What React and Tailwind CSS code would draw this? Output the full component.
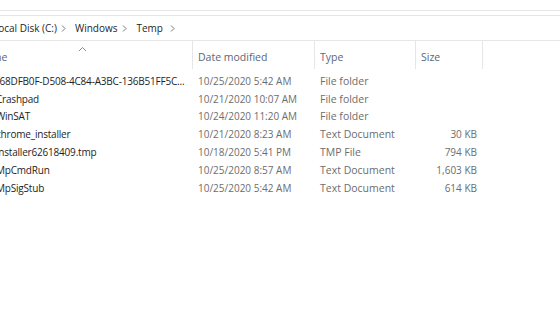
import React from 'react';

const ROWS = [
  { name: "{68DFB0F-D508-4C84-A3BC-136B51FF5C...", date: "10/25/2020 5:42 AM", type: "File folder", size: "" },
  { name: "Crashpad", date: "10/21/2020 10:07 AM", type: "File folder", size: "" },
  { name: "WinSAT", date: "10/24/2020 11:20 AM", type: "File folder", size: "" },
  { name: "chrome_installer", date: "10/21/2020 8:23 AM", type: "Text Document", size: "30 KB" },
  { name: "installer62618409.tmp", date: "10/18/2020 5:41 PM", type: "TMP File", size: "794 KB" },
  { name: "MpCmdRun", date: "10/25/2020 8:57 AM", type: "Text Document", size: "1,603 KB" },
  { name: "MpSigStub", date: "10/25/2020 5:42 AM", type: "Text Document", size: "614 KB" },
];

const Chevron = ({ className }) => (
  <svg width="7" height="9" viewBox="0 0 7 9" className={className}>
    <path d="M2 1.5 L5 4.5 L2 7.5" fill="none" stroke="#777" strokeWidth="1" />
  </svg>
);

export default function App() {
  return (
    <div className="w-[560px] h-[336px] bg-white overflow-hidden text-[10.5px] text-[#1e1e1e]" style={{ fontFamily: '"Open Sans", "Noto Sans", sans-serif' }}>
      {/* ribbon edge */}
      <div className="h-[11px] border-b border-[#e6e6e6]"></div>
      <div className="h-[4px]"></div>

      {/* address bar */}
      <div className="h-[26px] border-y border-[#e6e6e6] flex items-center overflow-hidden whitespace-nowrap text-[10px]">
        <span className="ml-[-7px]">Local Disk (C:)</span>
        <Chevron className="ml-[3px] mr-[8px]" />
        <span>Windows</span>
        <Chevron className="ml-[4px] mr-[8px]" />
        <span>Temp</span>
        <Chevron className="ml-[6px]" />
      </div>

      {/* column headers */}
      <div className="relative h-[28px] flex text-[#5b6678]">
        <svg width="9" height="6" viewBox="0 0 9 6" className="absolute left-[78px] top-[5px]">
          <path d="M1 5 L4.5 1.5 L8 5" fill="none" stroke="#8a8a8a" strokeWidth="1" />
        </svg>
        <div className="w-[192px] overflow-hidden pt-[9px] leading-[14px] whitespace-nowrap">
          <span className="ml-[-22px]">Name</span>
        </div>
        <div className="w-[122px] border-l border-[#e6e6e6] pl-[5px] pt-[9px] leading-[14px]">Date modified</div>
        <div className="w-[101px] border-l border-[#e6e6e6] pl-[5px] pt-[9px] leading-[14px]">Type</div>
        <div className="w-[68px] border-l border-r border-[#e6e6e6] pl-[5px] pt-[9px] leading-[14px]">Size</div>
      </div>

      {/* rows */}
      <div className="mt-[3px]">
        {ROWS.map((r) => (
          <div key={r.name} className="flex h-[17.8px] items-center leading-[14px]">
            <div className="w-[192px] overflow-hidden whitespace-nowrap text-[10px] tracking-[-0.2px]">
              <span className="ml-[-4px] text-[#1e1e1e]">{r.name}</span>
            </div>
            <div className="w-[122px] pl-[6px] text-[10px] text-[#6d6d6d] whitespace-nowrap">{r.date}</div>
            <div className="w-[101px] pl-[6px] text-[#6d6d6d] whitespace-nowrap">{r.type}</div>
            <div className="w-[68px] pr-[6px] text-right text-[10px] text-[#6d6d6d] whitespace-nowrap">{r.size}</div>
          </div>
        ))}
      </div>
    </div>
  );
}
